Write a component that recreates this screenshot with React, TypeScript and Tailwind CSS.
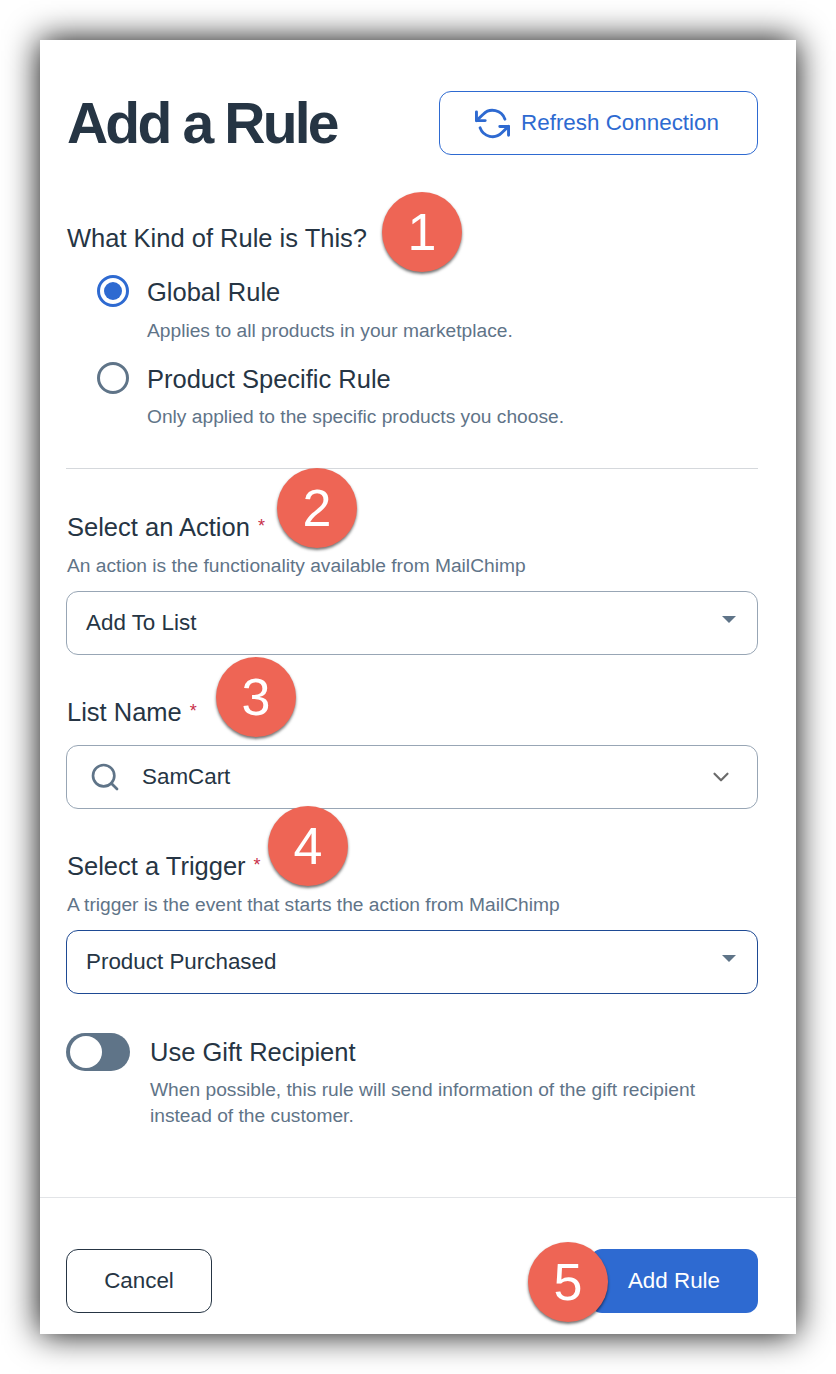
import { ChevronDown, Search } from "lucide-react"
import { FiRefreshCcw } from "react-icons/fi"

function Badge({ n, className }: { n: number; className: string }) {
    return (
        <div className={`absolute flex h-20 w-20 items-center justify-center rounded-full bg-[#ee6555] text-[52px] leading-none text-white shadow-[0_2px_3px_rgba(0,0,0,0.55)] ${className}`}>
            {n}
        </div>
    )
}

function Radio({ checked, label, hint }: { checked?: boolean; label: string; hint: string }) {
    return (
        <div className="flex gap-[18px] pl-[31px]">
            <div className={`mt-[1px] flex h-8 w-8 items-center justify-center rounded-full border-[3px] ${checked ? "border-[#2e6ad1]" : "border-[#5f7488]"}`}>
                {checked && <div className="h-[18px] w-[18px] rounded-full bg-[#2e6ad1]" />}
            </div>
            <div className="pt-px">
                <div className="h-[34px] text-[25.5px] leading-[34px] text-[#263544]">{label}</div>
                <div className={`h-[34px] text-[19.2px] leading-[34px] text-[#5f7488] ${checked ? "mt-[5px]" : "mt-[4px]"}`}>{hint}</div>
            </div>
        </div>
    )
}

function FieldLabel({ children }: { children: string }) {
    return (
        <div className="flex h-[36px] pl-px text-[25.5px] leading-[36px] text-[#263544]">
            {children}
            <span className="ml-[8px] text-[18px] leading-[34px] text-[#c8304a]">*</span>
        </div>
    )
}

function Caret() {
    return <div className="mb-[8px] h-0 w-0 border-x-[7px] border-t-[7px] border-x-transparent border-t-[#5f7488]" />
}

export default function App() {
    return (
        <div className="h-[1374px] w-[836px] overflow-hidden bg-white p-10 font-['Liberation_Sans',sans-serif]">
            <div className="relative flex h-[1294px] w-[756px] flex-col bg-white shadow-[0_0_32px_rgba(0,0,0,0.98)]">
                <div className="flex-1 pl-[26px] pr-[38px] pt-[51px]">
                    <div className="flex h-16 items-center justify-between">
                        <h1 className="pl-px text-[57px] font-bold leading-none tracking-[-2.8px] text-[#263544]">Add a Rule</h1>
                        <button className="flex h-16 w-[319px] items-center justify-center gap-[11px] rounded-xl border border-[#2e6ad1] pr-[3px] text-[22.4px] text-[#2e6ad1]">
                            <FiRefreshCcw size={35} />
                            Refresh Connection
                        </button>
                    </div>

                    <div className="mt-[65px] h-[36px] pl-px text-[25.5px] leading-[36px] text-[#263544]">What Kind of Rule is This?</div>
                    <div className="mt-[18px] flex flex-col gap-[13px]">
                        <Radio checked label="Global Rule" hint="Applies to all products in your marketplace." />
                        <Radio label="Product Specific Rule" hint="Only applied to the specific products you choose." />
                    </div>

                    <div className="mt-[34px] h-px bg-[#d5d8dc]" />

                    <div className="mt-[40px]">
                        <FieldLabel>Select an Action</FieldLabel>
                    </div>
                    <div className="mt-[6px] h-[30px] pl-px text-[19.2px] leading-[30px] text-[#5f7488]">An action is the functionality available from MailChimp</div>
                    <div className="mt-[10px] flex h-16 items-center justify-between rounded-xl border border-[#98a6b5] pl-[19px] pr-[21px] text-[22.4px] text-[#263544]">
                        Add To List
                        <Caret />
                    </div>

                    <div className="mt-[39px]">
                        <FieldLabel>List Name</FieldLabel>
                    </div>
                    <div className="mt-[15px] flex h-16 items-center rounded-xl border border-[#98a6b5] pl-[22px] pr-[23px] text-[22.4px] text-[#263544]">
                        <Search size={32} strokeWidth={2} className="text-[#5f7488]" />
                        <span className="ml-[21px] flex-1">SamCart</span>
                        <ChevronDown size={26} strokeWidth={2} className="text-[#6b6b6b]" />
                    </div>

                    <div className="mt-[39px]">
                        <FieldLabel>Select a Trigger</FieldLabel>
                    </div>
                    <div className="mt-[6px] h-[30px] pl-px text-[19.2px] leading-[30px] text-[#5f7488]">A trigger is the event that starts the action from MailChimp</div>
                    <div className="mt-[10px] flex h-16 items-center justify-between rounded-xl border border-[#1e4a94] pl-[19px] pr-[21px] text-[22.4px] text-[#263544]">
                        Product Purchased
                        <Caret />
                    </div>

                    <div className="mt-[39px] flex gap-[20px]">
                        <div className="flex h-[38px] w-16 items-center rounded-full bg-[#5f7488] pl-[4px]">
                            <div className="h-8 w-8 rounded-full bg-white" />
                        </div>
                        <div className="flex-1">
                            <div className="h-[38px] text-[25.5px] leading-[38px] text-[#263544]">Use Gift Recipient</div>
                            <div className="mt-[6px] text-[19.2px] leading-[26px] text-[#5f7488]">
                                When possible, this rule will send information of the gift recipient
                                <br />
                                instead of the customer.
                            </div>
                        </div>
                    </div>
                </div>

                <div className="flex h-[137px] items-start justify-between border-t border-[#e2e4e7] pl-[26px] pr-[38px] pt-[51px]">
                    <button className="h-16 w-[146px] rounded-xl border border-[#263544] text-[22.4px] text-[#263544]">Cancel</button>
                    <button className="h-16 w-[168px] rounded-xl bg-[#2e6ad1] text-[22.4px] text-white">Add Rule</button>
                </div>

                <Badge n={1} className="left-[342px] top-[152px]" />
                <Badge n={2} className="left-[237px] top-[428px]" />
                <Badge n={3} className="left-[176px] top-[617px]" />
                <Badge n={4} className="left-[228px] top-[766px]" />
                <Badge n={5} className="left-[488px] top-[1202px]" />
            </div>
        </div>
    )
}
